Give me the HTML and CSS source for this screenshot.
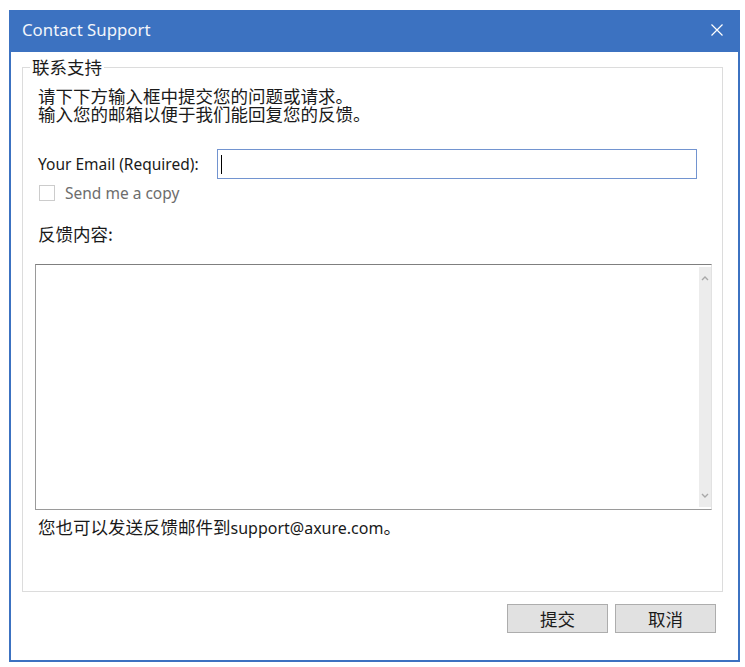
FILE: index.html
```html
<!DOCTYPE html>
<html lang="zh-CN">
<head>
<meta charset="utf-8">
<title>Contact Support</title>
<link rel="stylesheet" href="styles.css">
</head>
<body>
<div class="window">
  <div class="titlebar">
    <span class="title">Contact Support</span>
    <svg class="close" width="12" height="12" viewBox="0 0 12 12"><path d="M0.5 0.5 L11.5 11.5 M11.5 0.5 L0.5 11.5" stroke="#ffffff" stroke-width="1.2" fill="none"/></svg>
  </div>
  <div class="content">
    <fieldset class="group">
      <legend class="zh legend">联系支持</legend>
      <div class="intro zh">
        <p>请下下方输入框中提交您的问题或请求。</p>
        <p>输入您的邮箱以便于我们能回复您的反馈。</p>
      </div>
      <div class="email-row">
        <label class="latin email-label">Your Email (Required):</label>
        <div class="email-field"><span class="caret"></span></div>
      </div>
      <div class="copy-row">
        <span class="checkbox"></span>
        <span class="latin copy-text">Send me a copy</span>
      </div>
      <div class="feedback-label zh">反馈内容:</div>
      <div class="textbox">
        <div class="textarea"></div>
        <div class="scrollbar">
          <svg width="8" height="6" viewBox="0 0 8 6"><path d="M1 5 L4 2 L7 5" stroke="#a8a8a8" stroke-width="1.4" fill="none"/></svg>
          <svg width="8" height="6" viewBox="0 0 8 6"><path d="M1 1 L4 4 L7 1" stroke="#a8a8a8" stroke-width="1.4" fill="none"/></svg>
        </div>
      </div>
      <p class="note zh">您也可以发送反馈邮件到<span class="latin note-mail">support@axure.com</span>。</p>
    </fieldset>
    <div class="buttons">
      <button class="btn zh">提交</button>
      <button class="btn zh">取消</button>
    </div>
  </div>
</div>
</body>
</html>
```
FILE: styles.css
```css
html, body {
  margin: 0;
  padding: 0;
  background: #ffffff;
}

body {
  font-family: "Noto Sans", "Noto Sans CJK SC", sans-serif;
  color: #1a1a1a;
}

.zh {
  font-family: "Noto Sans CJK SC", "Noto Sans", sans-serif;
  font-size: 17.5px;
}

.latin {
  font-family: "Noto Sans", "Noto Sans CJK SC", sans-serif;
  font-size: 15.5px;
}

.window {
  margin: 10px 0 0 9px;
  width: 731px;
  height: 652px;
  box-sizing: border-box;
  border: 2px solid #3c72c1;
  border-top: 0;
  display: flex;
  flex-direction: column;
  background: #ffffff;
}

.titlebar {
  height: 42px;
  background: #3c72c1;
  display: flex;
  align-items: center;
  justify-content: space-between;
  margin: 0 -2px;
  padding-left: 13px;
  padding-right: 17px;
}

.title {
  color: #f2f5fb;
  font-family: "Noto Sans", sans-serif;
  font-size: 16.8px;
  line-height: 20px;
  padding-bottom: 2px;
}

.close {
  display: block;
  margin-top: -2px;
}

.content {
  flex: 1;
  padding: 5px 15px 0 11px;
}

.group {
  margin: 0;
  border: 1px solid #dcdcdc;
  padding: 0 10px 53px 12px;
}

.legend {
  line-height: 20px;
  padding: 0 2px;
  margin-left: -5px;
  color: #1a1a1a;
}

.intro {
  margin-top: 10px;
  padding-left: 3px;
}

.intro p {
  margin: 0;
  line-height: 18px;
  height: 18px;
}

.email-row {
  margin-top: 26px;
  display: grid;
  grid-template-columns: 182px 480px;
  align-items: center;
}

.email-label {
  padding-left: 3px;
  line-height: 20px;
}

.email-field {
  height: 30px;
  box-sizing: border-box;
  border: 1px solid #7294d0;
  background: #ffffff;
  display: flex;
  align-items: center;
  padding-left: 3px;
}

.caret {
  width: 1px;
  height: 19px;
  background: #000000;
}

.copy-row {
  margin-top: 4px;
  height: 20px;
  display: flex;
  align-items: center;
  padding-left: 4px;
}

.checkbox {
  width: 16px;
  height: 16px;
  box-sizing: border-box;
  border: 1px solid #cccccc;
  background: #ffffff;
}

.copy-text {
  margin-left: 10px;
  color: #6d6d6d;
}

.feedback-label {
  margin-top: 21px;
  line-height: 20px;
  padding-left: 3px;
}

.textbox {
  margin-top: 20px;
  height: 246px;
  box-sizing: border-box;
  border: 1px solid #9a9a9a;
  border-top-color: #7f7f7f;
  border-right-color: #e2e2e2;
  display: flex;
}

.textarea {
  flex: 1;
}

.scrollbar {
  width: 12px;
  margin: 2px 0 2px 0;
  background: #ececec;
  display: flex;
  flex-direction: column;
  justify-content: space-between;
  align-items: center;
  padding: 8px 0 8px 0;
}

.scrollbar svg {
  display: block;
}

.note {
  margin: 7px 0 0 0;
  line-height: 20px;
  padding-left: 3px;
}

.note-mail {
  font-size: 16px;
}

.buttons {
  margin-top: 12px;
  display: flex;
  justify-content: flex-end;
  gap: 7px;
  padding-right: 7px;
}

.btn {
  width: 101px;
  height: 29px;
  box-sizing: border-box;
  margin: 0;
  padding: 0;
  border: 1px solid #adadad;
  background: #e1e1e1;
  color: #1a1a1a;
  line-height: 27px;
}
```
